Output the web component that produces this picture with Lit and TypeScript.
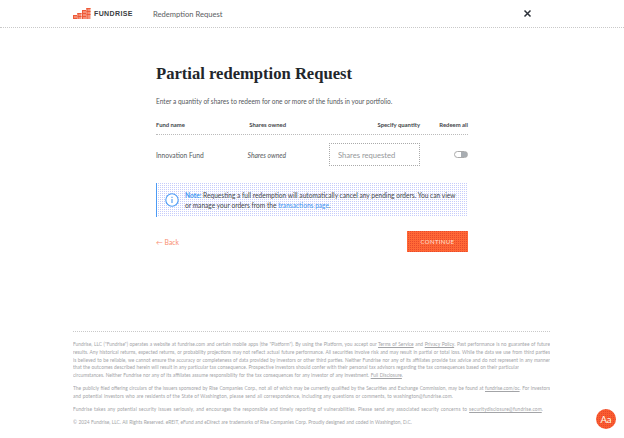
import { LitElement, html, css, svg } from "lit";
import { customElement } from "lit/decorators.js";

const bars: [number, number, number][] = [[73, 15, 4], [77.5, 13, 6], [82, 10, 9], [86.5, 8, 11]];

@customElement("app-root")
export class AppRoot extends LitElement {
  static styles = css`
    :host { display: block; width: 624px; height: 438px; background: #fff; font-family: Lato, "Liberation Sans", sans-serif; color: #55585c; position: relative; overflow: hidden; }
    header { height: 28px; box-sizing: border-box; display: flex; align-items: center; padding: 0 92px 0 73px; border-bottom: 1px dotted #c9c9c9; }
    .brand { display: flex; align-items: center; gap: 3px; font: 700 7px "Liberation Sans", sans-serif; letter-spacing: .38px; color: #3a3d42; width: 80px; }
    .brand svg { margin-top: -1px; }
    .htitle { font-size: 7.6px; color: #5a5d62; flex: 1; }
    .close { width: 9px; height: 9px; display: block; }
    main { width: 312px; margin: 0 auto; padding-top: 36px; }
    h1 { margin: 0; font: 700 16.6px/20px "Liberation Serif", serif; color: #22262b; }
    .intro { margin: 13px 0 0; font-size: 6.55px; line-height: 10px; }
    .grid { display: grid; grid-template-columns: 72px 58px 1fr 48px; }
    .head { margin-top: 12px; height: 11px; font-size: 5.9px; font-weight: 700; color: #44474b; align-items: center; border-bottom: 1px dotted #bbb; padding-bottom: 4px; box-sizing: content-box; }
    .right { text-align: right; }
    .row { height: 39px; align-items: center; font-size: 6.7px; }
    .owned { font-style: italic; text-align: right; }
    .input { justify-self: end; width: 91px; height: 23px; box-sizing: border-box; border: 1px dotted #aaa; padding-left: 8px; display: flex; align-items: center; font-size: 7.6px; color: #95979a; }
    .toggle { justify-self: end; width: 14px; height: 7px; box-sizing: border-box; border: 1px solid #aaa; border-radius: 4px; background: linear-gradient(90deg, #fff 50%, #a8adb2 50%); }
    .note { margin-top: 9px; height: 34px; display: flex; align-items: center; gap: 6px; padding: 0 6px 0 8px; box-sizing: border-box; border-left: 1px solid #4b9bf5; background: conic-gradient(#c6ccfb 25%, transparent 0) 0 0 / 2px 2px; font-size: 6.6px; line-height: 10.5px; color: #44474b; }
    .note svg { width: 14px; height: 14px; flex: none; }
    .note b { color: #3f95f2; }
    .note span.link { color: #3f95f2; }
    .actions { margin-top: 14px; display: flex; justify-content: space-between; align-items: center; }
    .back { font-size: 6.8px; color: #f98e70; }
    .btn { width: 61px; height: 21px; background: conic-gradient(#e84a2c 25%, #ff6836 0) 0 0 / 2px 2px; color: #ffe0d4; font-size: 6px; letter-spacing: .35px; display: flex; align-items: center; justify-content: center; }
    footer { position: absolute; left: 73px; top: 331px; width: 477px; border-top: 1px dotted #c9c9c9; padding-top: 9px; font-size: 4.85px; line-height: 7.75px; color: #a3a4a7; }
    footer section { margin: 0 0 5.25px; }
    footer div { white-space: nowrap; overflow: hidden; text-align: justify; text-align-last: justify; }
    footer div.l4 { width: 446px; letter-spacing: .04px; }
    footer div.l5 { width: 330px; }
    footer div.p2 { width: 380px; letter-spacing: .1px; }
    footer div.p3 { width: 470px; letter-spacing: .1px; }
    footer div.p4 { width: 339px; }
    footer u { text-decoration: underline; }
    .aa { position: absolute; left: 596px; top: 409px; width: 20px; height: 20px; border-radius: 50%; background: conic-gradient(#e8482a 25%, #fa5c30 0) 0 0 / 2px 2px; color: #ffe; font-size: 9.5px; display: flex; align-items: center; justify-content: center; }
  `;

  render() {
    return html`
      <header>
        <div class="brand">
          <svg width="18" height="11" viewBox="73 8 18 11">
            ${bars.map(([x, y, h]) => svg`<rect x=${x} y=${y} width="4" height=${h} fill="#f58f76"/>
              <rect x=${x} y=${y} width="1" height=${h} fill="#ee5a38"/>
              <rect x=${x} y=${y} width="4" height="1" fill="#ee5a38"/>
              <rect x=${x} y=${y + 3} width="4" height="1" fill="#ee5a38"/>
              <rect x=${x} y=${y + 6} width="4" height="1" fill=${h > 6 ? "#ee5a38" : "#f58f76"}/>`)}
          </svg>
          <span>FUNDRISE</span>
        </div>
        <div class="htitle">Redemption Request</div>
        <svg class="close" viewBox="0 0 9 9"><path d="M1.5 1.5l6 6M7.5 1.5l-6 6" stroke="#2b3038" stroke-width="1.5"/></svg>
      </header>
      <main>
        <h1>Partial redemption Request</h1>
        <p class="intro">Enter a quantity of shares to redeem for one or more of the funds in your portfolio.</p>
        <div class="grid head">
          <div>Fund name</div><div class="right">Shares owned</div><div class="right">Specify quantity</div><div class="right">Redeem all</div>
        </div>
        <div class="grid row">
          <div>Innovation Fund</div><div class="owned">Shares owned</div>
          <div class="input">Shares requested</div>
          <div class="toggle"></div>
        </div>
        <div class="note">
          <svg viewBox="0 0 14 14"><circle cx="7" cy="7" r="6.2" fill="#fff" stroke="#4b9bf5" stroke-width="1.1"/><path d="M7 6v4M7 3.8v1.1" stroke="#4b9bf5" stroke-width="1.1"/></svg>
          <div><b>Note:</b> Requesting a full redemption will automatically cancel any pending orders. You can view or manage your orders from the <span class="link">transactions page</span>.</div>
        </div>
        <div class="actions">
          <div class="back">← Back</div>
          <div class="btn">CONTINUE</div>
        </div>
      </main>
      <footer>
        <section>
          <div>Fundrise, LLC ("Fundrise") operates a website at fundrise.com and certain mobile apps (the "Platform"). By using the Platform, you accept our <u>Terms of Service</u> and <u>Privacy Policy</u>. Past performance is no guarantee of future</div>
          <div>results. Any historical returns, expected returns, or probability projections may not reflect actual future performance. All securities involve risk and may result in partial or total loss. While the data we use from third parties</div>
          <div>is believed to be reliable, we cannot ensure the accuracy or completeness of data provided by investors or other third parties. Neither Fundrise nor any of its affiliates provide tax advice and do not represent in any manner</div>
          <div class="l4">that the outcomes described herein will result in any particular tax consequence. Prospective investors should confer with their personal tax advisors regarding the tax consequences based on their particular</div>
          <div class="l5">circumstances. Neither Fundrise nor any of its affiliates assume responsibility for the tax consequences for any investor of any investment. <u>Full Disclosure</u>.</div>
        </section>
        <section>
          <div>The publicly filed offering circulars of the issuers sponsored by Rise Companies Corp., not all of which may be currently qualified by the Securities and Exchange Commission, may be found at <u>fundrise.com/oc</u>. For investors</div>
          <div class="p2">and potential investors who are residents of the State of Washington, please send all correspondence, including any questions or comments, to washington@fundrise.com.</div>
        </section>
        <section><div class="p3">Fundrise takes any potential security issues seriously, and encourages the responsible and timely reporting of vulnerabilities. Please send any associated security concerns to <u>securitydisclosure@fundrise.com</u>.</div></section>
        <section><div class="p4">© 2024 Fundrise, LLC. All Rights Reserved. eREIT, eFund and eDirect are trademarks of Rise Companies Corp. Proudly designed and coded in Washington, D.C.</div></section>
      </footer>
      <div class="aa">Aa</div>
    `;
  }
}
